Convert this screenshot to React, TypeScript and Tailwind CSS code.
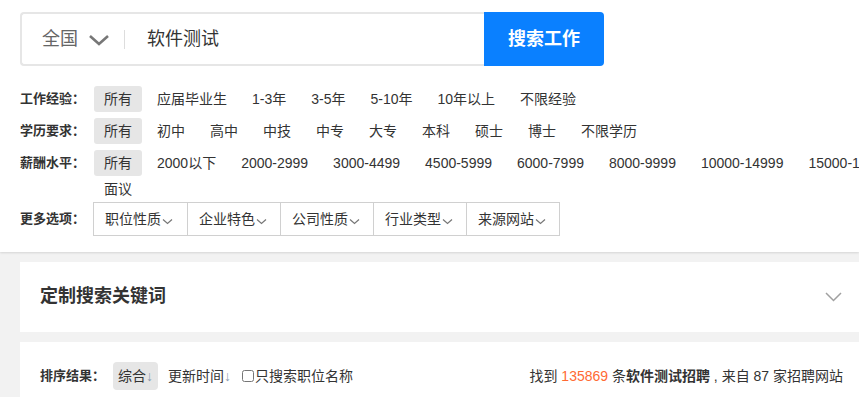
import React from 'react';

const font = { fontFamily: '"Liberation Sans", "Noto Sans CJK SC", sans-serif' };

const filters = [
    { label: '工作经验：', options: ['所有', '应届毕业生', '1-3年', '3-5年', '5-10年', '10年以上', '不限经验'] },
    { label: '学历要求：', options: ['所有', '初中', '高中', '中技', '中专', '大专', '本科', '硕士', '博士', '不限学历'] },
    {
        label: '薪酬水平：',
        options: ['所有', '2000以下', '2000-2999', '3000-4499', '4500-5999', '6000-7999', '8000-9999', '10000-14999', '15000-19999', '20000以上', '面议'],
    },
];

const moreOptions = ['职位性质', '企业特色', '公司性质', '行业类型', '来源网站'];

const SmallChevron = () => (
    <svg width="11" height="7" viewBox="0 0 11 7" className="ml-[1px] mt-[4px]">
        <path d="M1 1.5 L5.5 5.5 L10 1.5" fill="none" stroke="#777" strokeWidth="1.2" />
    </svg>
);

const App: React.FC = () => {
    return (
        <div className="w-full min-h-screen overflow-hidden bg-[#f2f2f2] text-[#333]" style={font}>
            {/* top search + filters */}
            <div className="bg-white px-[20px] pt-[12px] pb-[16px] shadow-[0_1px_2px_rgba(0,0,0,0.12)]">
                <div className="flex w-[584px] h-[54px]">
                    <div className="flex-1 flex items-center border-2 border-r-0 border-[#e6e6e6] rounded-l-[4px] pl-[20px]">
                        <span className="text-[18px] text-[#666]">全国</span>
                        <svg width="22" height="12" viewBox="0 0 22 12" className="ml-[10px] mt-[1px]">
                            <path d="M2 2 L11 10 L20 2" fill="none" stroke="#777" strokeWidth="2.6" />
                        </svg>
                        <div className="w-px h-[19px] bg-[#dddddd] ml-[14px]" />
                        <span className="text-[18px] text-[#333] ml-[22px]">软件测试</span>
                    </div>
                    <button className="w-[120px] h-full bg-[#0a80ff] rounded-r-[4px] text-white text-[18px] font-bold">
                        搜索工作
                    </button>
                </div>

                <div className="mt-[20px]">
                    {filters.map((row, i) => (
                        <div key={row.label} className={`flex ${i < 2 ? 'mb-[6px]' : ''}`}>
                            <div className="w-[74px] shrink-0 h-[26px] leading-[26px] text-[13px] font-bold">{row.label}</div>
                            <div className="w-[930px] shrink-0 flex flex-wrap">
                                {row.options.map((o, j) => (
                                    <span
                                        key={o}
                                        className={`h-[26px] leading-[26px] px-[10px] mr-[5px] text-[14px] rounded-[3px] whitespace-nowrap ${j === 0 ? 'bg-[#e6e6e6]' : ''}`}
                                    >
                                        {o}
                                    </span>
                                ))}
                            </div>
                        </div>
                    ))}
                    <div className="flex items-center">
                        <div className="w-[73px] shrink-0 text-[13px] font-bold">更多选项：</div>
                        <div className="flex border border-[#d0d0d0]">
                            {moreOptions.map((o, j) => (
                                <div
                                    key={o}
                                    className={`w-[93px] h-[32px] flex items-center pl-[11px] text-[14px] ${j > 0 ? 'border-l border-[#d0d0d0]' : ''}`}
                                >
                                    <span>{o}</span>
                                    <SmallChevron />
                                </div>
                            ))}
                        </div>
                    </div>
                </div>
            </div>

            {/* keyword card */}
            <div className="ml-[20px] mt-[10px] h-[70px] bg-white flex items-center justify-between pl-[20px] pr-[17px]">
                <h2 className="text-[18px] font-bold -mt-[2px]">定制搜索关键词</h2>
                <svg width="17" height="10" viewBox="0 0 17 10">
                    <path d="M1 1 L8.5 8.5 L16 1" fill="none" stroke="#a0a0a0" strokeWidth="1.5" />
                </svg>
            </div>

            {/* sort bar */}
            <div className="ml-[20px] mt-[10px] h-[100px] bg-white pl-[20px] pr-[16px] pt-[20px]">
                <div className="flex items-center justify-between">
                    <div className="flex items-center">
                        <span className="text-[13px] font-bold mr-[8px]">排序结果：</span>
                        <span className="h-[28px] leading-[28px] px-[5px] rounded-[4px] bg-[#e6e6e6] text-[14px]">
                            综合<span className="text-[#8a9bb0]">↓</span>
                        </span>
                        <span className="ml-[10px] text-[14px]">
                            更新时间<span className="text-[#8a9bb0]">↓</span>
                        </span>
                        <label className="ml-[11px] flex items-center text-[14px]">
                            <input type="checkbox" className="w-[12px] h-[12px] m-0 mr-[1px]" />
                            只搜索职位名称
                        </label>
                    </div>
                    <div className="text-[14px]">
                        找到 <span className="text-[#ff6a33]">135869</span> 条<b>软件测试招聘</b> , 来自 87 家招聘网站
                    </div>
                </div>
            </div>
        </div>
    );
};

export default App;
